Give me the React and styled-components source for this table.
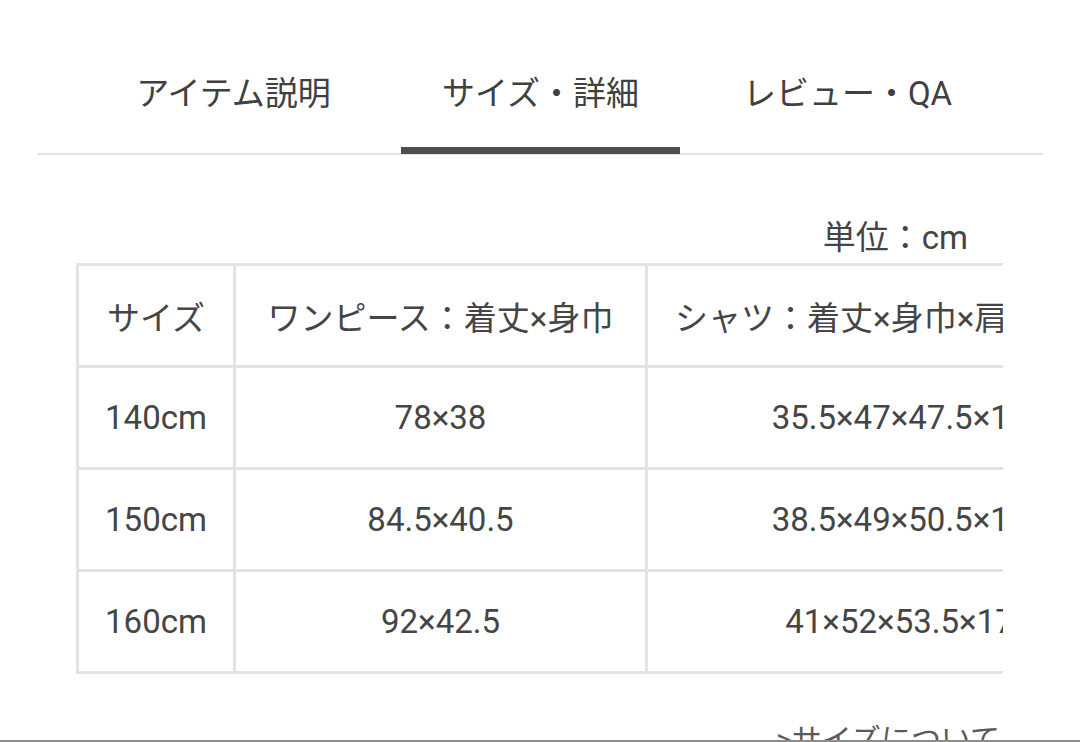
import React from 'react'
import styled, { createGlobalStyle } from 'styled-components'

const GlobalStyle = createGlobalStyle`
  html, body {
    margin: 0;
    padding: 0;
    background: #fff;
  }
  body {
    font-family: Roboto, "Noto Sans CJK JP", sans-serif;
    color: #444;
  }
`

const tabs = ['アイテム説明', 'サイズ・詳細', 'レビュー・QA']

const header = ['サイズ', 'ワンピース：着丈×身巾', 'シャツ：着丈×身巾×肩幅×袖丈']

const rows = [
  ['140cm', '78×38', '35.5×47×47.5×16'],
  ['150cm', '84.5×40.5', '38.5×49×50.5×17'],
  ['160cm', '92×42.5', '41×52×53.5×17'],
]

const App = () => {
  return (
    <Page>
      <GlobalStyle />
      <TabBar>
        {tabs.map((t, i) => (
          <Tab key={t}>
            <TabLabel active={i === 1}>{t}</TabLabel>
          </Tab>
        ))}
      </TabBar>

      <Content>
        <Unit>単位：cm</Unit>
        <TableScroll>
          <SizeTable>
            {header.map((h) => (
              <Cell key={h} head>{h}</Cell>
            ))}
            {rows.map((r) =>
              r.map((v, j) => <Cell key={r[0] + j}>{v}</Cell>)
            )}
          </SizeTable>
        </TableScroll>
        <SizeLink>&gt;サイズについて</SizeLink>
      </Content>
    </Page>
  )
}

export default App

const Page = styled.div`
  height: 742px;
  box-sizing: border-box;
  overflow: hidden;
  padding-top: 33px;
  border-bottom: 2px solid #8c8c8c;
`

const TabBar = styled.div`
  margin: 0 37px 0 38px;
  border-bottom: 2px solid #e2e2e2;
  display: grid;
  grid-template-columns: repeat(3, 307px);
  justify-content: center;
`

const Tab = styled.div`
  display: flex;
  justify-content: center;
`

const TabLabel = styled.div`
  position: relative;
  height: 120px;
  padding: 0 41px 4px;
  box-sizing: border-box;
  display: flex;
  align-items: center;
  font-size: 33px;
  color: #404040;
  white-space: nowrap;

  &::after {
    content: '';
    display: ${(p) => (p.active ? 'block' : 'none')};
    position: absolute;
    left: 0;
    right: 0;
    bottom: -1px;
    height: 7px;
    background: #4e4e4e;
  }
`

const Content = styled.div`
  padding: 0 76px;
`

const Unit = styled.div`
  margin-top: 63px;
  margin-bottom: 5px;
  line-height: 40px;
  font-size: 33px;
  text-align: right;
  padding-right: 36px;
  color: #444;
`

const TableScroll = styled.div`
  width: 927px;
  overflow: hidden;
`

const SizeTable = styled.div`
  display: grid;
  grid-template-columns: 157px 412px 506px;
  width: max-content;
  border-top: 3px solid #e3e3e3;
  border-left: 3px solid #e3e3e3;
`

const Cell = styled.div`
  box-sizing: border-box;
  height: 102px;
  display: flex;
  align-items: center;
  justify-content: center;
  border-right: 3px solid #e3e3e3;
  border-bottom: 3px solid #e3e3e3;
  font-size: 33px;
  white-space: nowrap;
  overflow: hidden;
  color: #454545;
`

const SizeLink = styled.div`
  margin-top: 46px;
  line-height: 40px;
  font-size: 30px;
  text-align: right;
  padding-right: 4px;
  color: #5a5a5a;
`
